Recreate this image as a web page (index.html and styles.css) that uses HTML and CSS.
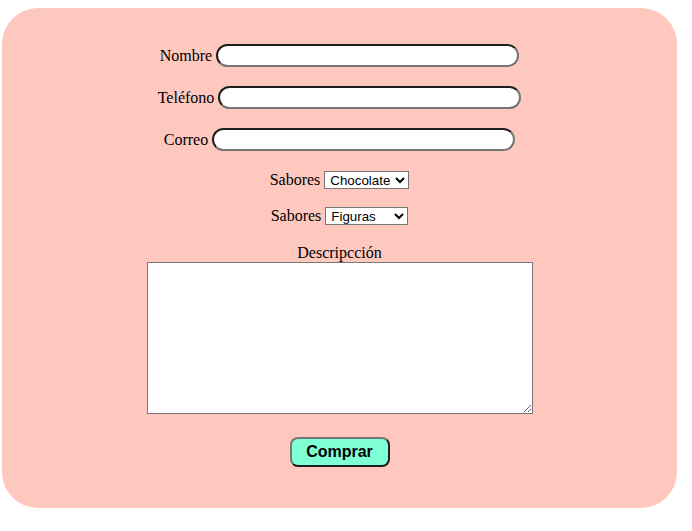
FILE: index.html
```html
<!DOCTYPE html>
<html lang="es">
<head>
<meta charset="utf-8">
<title>Pedido</title>
<link rel="stylesheet" href="styles.css">
</head>
<body>
<form class="card">
  <div class="row first"><label>Nombre</label><input class="pill" type="text"></div>
  <div class="row"><label>Teléfono</label><input class="pill" type="text"></div>
  <div class="row"><label>Correo</label><input class="pill" type="text"></div>
  <div class="row sel1"><label>Sabores</label><select class="choice w84"><option>Chocolate</option><option>Vainilla</option><option>Fresa</option></select></div>
  <div class="row sel2"><label>Sabores</label><select class="choice w82"><option>Figuras</option><option>Letras</option></select></div>
  <div class="desc">
    <label class="desc-label">Descripcción</label>
    <textarea class="area"></textarea>
  </div>
  <button class="buy" type="button">Comprar</button>
</form>
</body>
</html>
```
FILE: styles.css
```css
html, body {
  margin: 0;
  padding: 0;
  background: #ffffff;
}
.card {
  margin: 8px 0 0 2px;
  width: 675px;
  height: 500px;
  box-sizing: border-box;
  background: #ffc8bf;
  border-radius: 36px;
  padding-top: 36px;
  display: flex;
  flex-direction: column;
  align-items: center;
  font-family: "Liberation Serif", "Times New Roman", serif;
  font-size: 16px;
  color: #000;
}
.row {
  display: flex;
  align-items: center;
  gap: 4px;
  height: 23px;
  margin-top: 19px;
}
.row.first { margin-top: 0; }
.row.sel1 { margin-top: 20px; height: 18px; }
.row.sel2 { margin-top: 18px; height: 18px; }
.pill {
  box-sizing: border-box;
  width: 303px;
  height: 23px;
  border: 2px solid;
  border-color: #1e1e1e #767676 #767676 #1e1e1e;
  border-radius: 12px;
  background: #fff;
  padding: 1px 8px;
  outline: none;
  font-family: "Liberation Sans", Arial, sans-serif;
  font-size: 13px;
}
.choice {
  box-sizing: border-box;
  height: 18px;
  border: 1px solid #767676;
  border-radius: 0;
  background: #fff;
  font-family: "Liberation Sans", Arial, sans-serif;
  font-size: 13.33px;
  color: #000;
  padding: 0 0 0 1px;
}
.w84 { width: 85px; }
.w82 { width: 83px; }
.desc {
  display: flex;
  flex-direction: column;
  align-items: center;
  margin-top: 19px;
}
.desc-label {
  line-height: 18px;
}
.area {
  box-sizing: border-box;
  width: 386px;
  height: 152px;
  border: 1px solid #767676;
  background: #fff;
  margin: 0;
  padding: 2px;
}
.buy {
  margin-top: 23px;
  box-sizing: border-box;
  width: 100px;
  height: 30px;
  background: #7fffd4;
  border: 2px solid;
  border-color: #767676 #1e1e1e #1e1e1e #767676;
  border-radius: 8px;
  font-family: "Liberation Sans", Arial, sans-serif;
  font-weight: bold;
  font-size: 16px;
  color: #000;
  padding: 0;
}
```
